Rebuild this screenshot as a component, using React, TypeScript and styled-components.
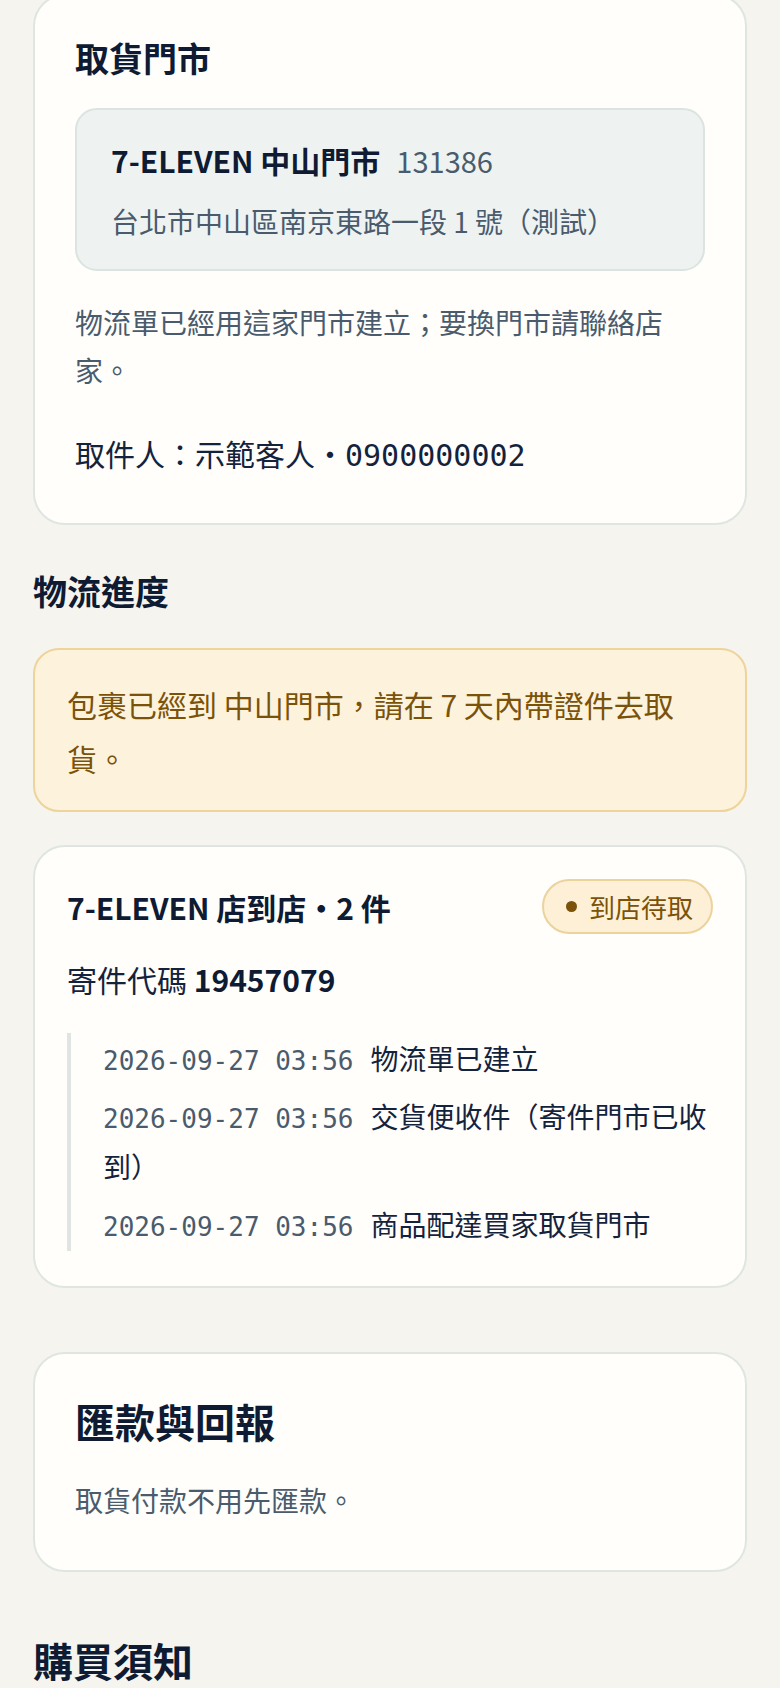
import React from "react";
import styled, { createGlobalStyle } from "styled-components";

const GlobalStyle = createGlobalStyle`
  html, body {
    margin: 0;
    padding: 0;
    background: #f6f4ef;
  }
  body {
    font-family: "Noto Sans CJK TC", "Noto Sans", sans-serif;
    color: #14233d;
    overflow: hidden;
  }
  * {
    box-sizing: border-box;
  }
`;

const Page = styled.main`
  padding: 0 33px;
  height: 1688px;
  overflow: hidden;
`;

const Card = styled.section<{ $pad?: number }>`
  background: #fffefb;
  border: 2px solid #dfe6e2;
  border-radius: 32px;
  padding: ${(p) => p.$pad ?? 40}px;
`;

const FirstCard = styled(Card)`
  margin-top: -6px;
  padding-bottom: 45px;
`;

const CardTitle = styled.h2<{ $size?: number }>`
  margin: 0;
  font-size: ${(p) => p.$size ?? 34}px;
  line-height: ${(p) => ((p.$size ?? 34) === 40 ? 56 : 44)}px;
  font-weight: 700;
  color: #0e1b33;
`;

const SectionTitle = styled.h2<{ $size?: number; $top: number }>`
  margin: ${(p) => p.$top}px 0 0;
  font-size: ${(p) => p.$size ?? 34}px;
  line-height: ${(p) => ((p.$size ?? 34) === 40 ? 56 : 44)}px;
  font-weight: 700;
  color: #0e1b33;
`;

const StoreBox = styled.div`
  margin-top: 28px;
  background: #eef3f1;
  border: 2px solid #dbe4e0;
  border-radius: 22px;
  padding: 28px 34px 24px;
`;

const StoreName = styled.div`
  font-size: 30px;
  line-height: 45px;
  font-weight: 700;
  color: #0e1b33;
`;

const StoreCode = styled.span`
  margin-left: 16px;
  font-size: 29px;
  font-weight: 400;
  color: #4a5b6d;
`;

const StoreAddress = styled.div`
  margin-top: 14px;
  font-size: 28px;
  line-height: 48px;
  color: #4a5b6d;
`;

const Muted = styled.p<{ $top: number }>`
  margin: ${(p) => p.$top}px 0 0;
  font-size: 28px;
  line-height: 48px;
  color: #4a5b6d;
`;

const Recipient = styled.p`
  margin: 34px 0 0;
  font-size: 30px;
  line-height: 50px;
  color: #14233d;
`;

const Mono = styled.span`
  font-family: "DejaVu Sans Mono", "Liberation Mono", monospace;
  font-size: 30px;
  line-height: 1;
`;

const Notice = styled.div`
  margin-top: 35px;
  background: #fdf2dc;
  border: 2px solid #eed39b;
  border-radius: 26px;
  padding: 27px 32px 25px;
  font-size: 30px;
  line-height: 54px;
  color: #7b5209;
`;

const ShipCard = styled(Card)`
  margin-top: 33px;
  padding-bottom: 35px;
`;

const ShipHeader = styled.div`
  display: flex;
  align-items: center;
  justify-content: space-between;
  gap: 16px;
`;

const ShipTitle = styled.div`
  font-size: 30px;
  line-height: 44px;
  font-weight: 700;
  color: #0e1b33;
`;

const Badge = styled.span`
  display: inline-flex;
  align-items: center;
  gap: 12px;
  height: 55px;
  padding: 0 18px 0 22px;
  border-radius: 999px;
  background: #fdf0d7;
  border: 2px solid #ecd29b;
  color: #7b5209;
  font-size: 26px;
  line-height: 1;
`;

const Dot = styled.span`
  width: 11px;
  height: 11px;
  border-radius: 50%;
  background: #7b5209;
`;

const Code = styled.p`
  margin: 20px 0 0;
  font-size: 30px;
  line-height: 50px;
  color: #14233d;

  b {
    font-weight: 700;
    color: #0e1b33;
  }
`;

const Timeline = styled.ol`
  list-style: none;
  margin: 29px 0 0;
  padding: 0 0 2px 32px;
  border-left: 4px solid #dfe5e2;
  display: flex;
  flex-direction: column;
  gap: 8px;
`;

const Event = styled.li`
  font-size: 28px;
  line-height: 50px;
  color: #14233d;
`;

const Time = styled.span`
  font-family: "DejaVu Sans Mono", "Liberation Mono", monospace;
  font-size: 26px;
  line-height: 1;
  color: #4a5b6d;
  margin-right: 17px;
`;

const PayCard = styled(Card)`
  margin-top: 64px;
  padding-top: 39px;
  padding-bottom: 46px;
`;

const events = [
  { time: "2026-09-27 03:56", text: "物流單已建立" },
  { time: "2026-09-27 03:56", text: "交貨便收件（寄件門市已收到）" },
  { time: "2026-09-27 03:56", text: "商品配達買家取貨門市" },
];

export default function App() {
  return (
    <>
      <GlobalStyle />
      <Page>
        <FirstCard>
          <CardTitle>取貨門市</CardTitle>
          <StoreBox>
            <StoreName>
              7-ELEVEN 中山門市
              <StoreCode>131386</StoreCode>
            </StoreName>
            <StoreAddress>台北市中山區南京東路一段 1 號（測試）</StoreAddress>
          </StoreBox>
          <Muted $top={27}>物流單已經用這家門市建立；要換門市請聯絡店家。</Muted>
          <Recipient>
            取件人：示範客人・<Mono>0900000002</Mono>
          </Recipient>
        </FirstCard>

        <SectionTitle $top={44}>物流進度</SectionTitle>
        <Notice>包裹已經到 中山門市，請在 7 天內帶證件去取貨。</Notice>

        <ShipCard $pad={32}>
          <ShipHeader>
            <ShipTitle>7-ELEVEN 店到店・2 件</ShipTitle>
            <Badge>
              <Dot />
              到店待取
            </Badge>
          </ShipHeader>
          <Code>
            寄件代碼 <b>19457079</b>
          </Code>
          <Timeline>
            {events.map((e, i) => (
              <Event key={i}>
                <Time>{e.time}</Time>
                {e.text}
              </Event>
            ))}
          </Timeline>
        </ShipCard>

        <PayCard>
          <CardTitle $size={40}>匯款與回報</CardTitle>
          <Muted $top={27}>取貨付款不用先匯款。</Muted>
        </PayCard>

        <SectionTitle $size={40} $top={60}>
          購買須知
        </SectionTitle>
      </Page>
    </>
  );
}
